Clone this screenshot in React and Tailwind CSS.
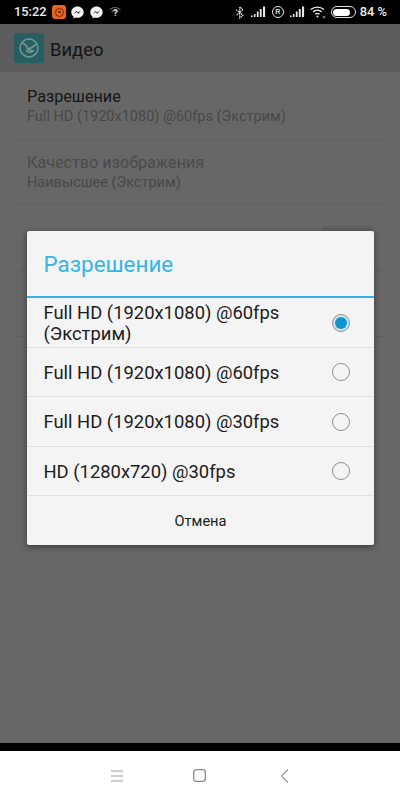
const options = [
  { label: 'Full HD (1920x1080) @60fps (Экстрим)', h: 'h-[50px]', selected: true },
  { label: 'Full HD (1920x1080) @60fps', h: 'h-[49px]' },
  { label: 'Full HD (1920x1080) @30fps', h: 'h-[50px]' },
  { label: 'HD (1280x720) @30fps', h: 'h-[49px]' },
]

function Signal() {
  return (
    <svg width="15" height="12" viewBox="0 0 15 12" fill="#e8e8e8">
      <rect x="0" y="9.5" width="1.6" height="1.5" />
      <rect x="2.9" y="8" width="1.6" height="3" />
      <rect x="5.8" y="5.5" width="1.8" height="5.5" />
      <rect x="8.8" y="3" width="1.9" height="8" />
      <rect x="12" y="0.5" width="2.1" height="10.5" />
    </svg>
  )
}

function Messenger() {
  return (
    <svg width="13" height="13" viewBox="0 0 13 13">
      <path d="M6.5 0.5C3 0.5 0.3 3 0.3 6.2c0 1.8.9 3.3 2.2 4.3v2.1l2-1.1c.6.2 1.3.3 2 .3 3.5 0 6.2-2.6 6.2-5.6S10 .5 6.5.5z" fill="#f4f4f4" />
      <path d="M2.8 8l2.7-3 1.6 1.6L10 4.6 7.4 7.7 5.7 6.1z" fill="#111" />
    </svg>
  )
}

function StatusBar() {
  return (
    <div className="h-6 bg-black flex items-center justify-between pl-[14px] pr-[13px] text-[#ececec] text-[12.8px] font-medium">
      <div className="flex items-center">
        <span>15:22</span>
        <div className="ml-[6px] w-[14px] h-[14px] rounded-[3px] bg-[#e8641c] flex items-center justify-center">
          <div className="w-[9px] h-[9px] rounded-full border border-[#6e2c0a] flex items-center justify-center">
            <div className="w-[3px] h-[2px] bg-[#6e2c0a]" />
          </div>
        </div>
        <div className="ml-[5px] flex items-center gap-[6px]">
          <Messenger />
          <Messenger />
        </div>
        <div className="relative ml-[6px] w-[12px] h-[12px]">
          <svg width="12" height="12" viewBox="0 0 12 12" fill="none" stroke="#6f6f6f" strokeWidth="1.1">
            <path d="M.6 3.6C3.8 1 8.2 1 11.4 3.6" />
            <path d="M2.6 5.8C4.6 4.4 7.4 4.4 9.4 5.8" />
          </svg>
          <span className="absolute inset-0 text-center text-[9px] leading-[14px] font-bold text-[#e0e0e0]">?</span>
        </div>
      </div>
      <div className="flex items-center">
        <svg width="10" height="13" viewBox="0 0 10 13" fill="none" stroke="#e4e4e4" strokeWidth="1.1" strokeDasharray="1.6 .5">
          <path d="M1 3.6l7 5.6-3.3 3V.8L8 3.8 1 9.4" />
        </svg>
        <div className="ml-[6px]"><Signal /></div>
        <div className="ml-[6px] w-[12px] h-[12px] rounded-full border border-[#e4e4e4] text-[8px] leading-[10px] text-center">R</div>
        <div className="ml-[6px]"><Signal /></div>
        <svg className="ml-[5px]" width="16" height="13" viewBox="0 0 16 13" fill="none" stroke="#eee" strokeWidth="1.3">
          <path d="M.8 3.6c3.8-3.2 9.4-3.2 13.2 0" />
          <path d="M3 6c2.6-2.2 6.2-2.2 8.8 0" />
          <path d="M5.2 8.3c1.3-1.1 3.1-1.1 4.4 0" />
          <circle cx="7.4" cy="10.4" r="1" fill="#eee" stroke="none" />
          <circle cx="14" cy="11.2" r="1" fill="none" stroke="#aaa" strokeWidth=".8" />
        </svg>
        <div className="ml-[5px] w-[25px] h-[12px] rounded-full border border-[#e4e4e4] p-[1.5px]">
          <div className="h-full w-[85%] bg-white rounded-full" />
        </div>
        <span className="ml-[4px]">84 %</span>
      </div>
    </div>
  )
}

function SettingRow({ title, sub, dim, className }) {
  return (
    <div className={`mx-[17px] border-b border-[#5f5f5f] px-[10px] ${className}`}>
      <div className={`text-[16.2px] leading-5 ${dim ? 'text-[#4a4a4a]' : 'text-[#161616]'}`}>{title}</div>
      <div className="text-[14.5px] leading-5 text-[#484848]">{sub}</div>
    </div>
  )
}

function Radio({ selected }) {
  return (
    <div className={`w-[18px] h-[18px] rounded-full border border-[#8f8f8f] flex items-center justify-center ${selected ? 'bg-[#cfe6ef]' : ''}`}>
      {selected && <div className="w-[12px] h-[12px] rounded-full bg-[#1295cf]" />}
    </div>
  )
}

function Dialog() {
  return (
    <div className="absolute left-[27px] top-[231px] w-[347px] bg-[#f4f4f4] rounded-[2px] shadow-[0_2px_6px_rgba(0,0,0,0.45)]">
      <div className="h-[67px] border-b-2 border-[#35b5e5] pl-[16.5px] pt-[19px] text-[22.4px] leading-7 text-[#35b5e5]">Разрешение</div>
      {options.map(o => (
        <div key={o.label} className={`${o.h} border-b border-[#e0e0e0] pl-[16.5px] pr-[24px] flex items-center justify-between`}>
          <span className="w-[260px] text-[18.4px] leading-[21px] text-[#1c1c1c]">{o.label}</span>
          <Radio selected={o.selected} />
        </div>
      ))}
      <div className="h-[49px] pt-[2px] flex items-center justify-center text-[14.6px] text-[#222]">Отмена</div>
    </div>
  )
}

export default function App() {
  return (
    <div className="relative w-[400px] h-[800px] overflow-hidden bg-white font-['Roboto','Noto_Sans',sans-serif]">
      <StatusBar />
      <div className="h-[719px] bg-[#676767]">
        <div className="h-[48px] bg-[#5c5c5c] flex items-center pl-[14px]">
          <div className="w-[30px] h-[30px] rounded-[3px] bg-[#265e62] flex items-center justify-center">
            <svg width="22" height="22" viewBox="0 0 22 22" fill="none" stroke="#7d9a9a" strokeWidth="1.4">
              <circle cx="11" cy="11" r="9" />
              <path d="M4 6c3 1 5 3 6 6 3-1 6-2 8-5M8 13c2 3 5 3 7 1-2 0-4-1-5-2" />
            </svg>
          </div>
          <span className="ml-[6px] pt-[3px] text-[18.4px] text-[#141414]">Видео</span>
        </div>
        <SettingRow title="Разрешение" sub="Full HD (1920x1080) @60fps (Экстрим)" className="h-[68px] pt-[15px]" />
        <SettingRow title="Качество изображения" sub="Наивысшее (Экстрим)" dim className="h-[65px] pt-[13px]" />
        <div className="h-[66px] mx-[17px] border-b border-[#5f5f5f] flex items-start justify-end pt-[21px] pr-[11px]">
          <div className="w-[50px] h-[24px] rounded-[2px] bg-[#5f5f5f]" />
        </div>
        <div className="h-[66px] mx-[17px] border-b border-[#5f5f5f]" />
      </div>
      <div className="h-[8px] bg-black" />
      <div className="h-[49px] bg-white flex items-center justify-center">
        <svg width="12" height="12" viewBox="0 0 12 12" stroke="#9a9a9a" strokeWidth="1.2"><path d="M0 1h12M0 6h12M0 11h12" /></svg>
        <svg className="ml-[70px]" width="13" height="13" viewBox="0 0 13 13" fill="none" stroke="#8a8a8a" strokeWidth="1.3"><rect x=".7" y=".7" width="11.6" height="11.6" rx="2.5" /></svg>
        <svg className="ml-[74px]" width="9" height="14" viewBox="0 0 9 14" fill="none" stroke="#9a9a9a" strokeWidth="1.2"><path d="M8 .5L1.5 7 8 13.5" /></svg>
      </div>
      <Dialog />
    </div>
  )
}
